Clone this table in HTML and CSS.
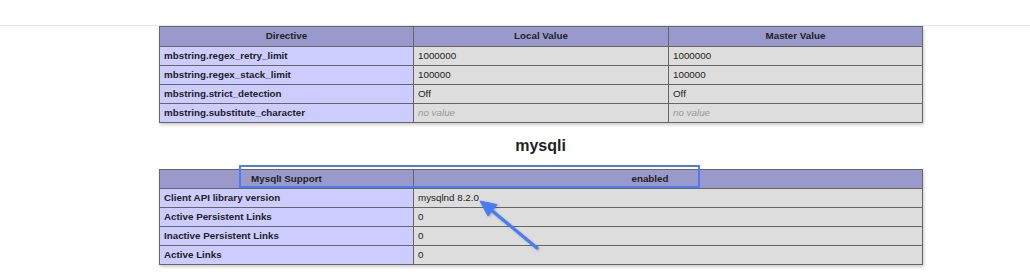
FILE: index.html
```html
<!DOCTYPE html>
<html>
<head>
<meta charset="utf-8">
<link rel="stylesheet" href="styles.css">
</head>
<body>
<div class="topbar"></div>
<div class="page">
  <table class="info first">
    <colgroup><col class="c1"><col class="c2"><col class="c3"></colgroup>
    <tr class="h"><th>Directive</th><th>Local Value</th><th>Master Value</th></tr>
    <tr><td class="e">mbstring.regex_retry_limit</td><td class="v">1000000</td><td class="v">1000000</td></tr>
    <tr><td class="e">mbstring.regex_stack_limit</td><td class="v">100000</td><td class="v">100000</td></tr>
    <tr><td class="e">mbstring.strict_detection</td><td class="v">Off</td><td class="v">Off</td></tr>
    <tr><td class="e">mbstring.substitute_character</td><td class="v"><i class="nv">no value</i></td><td class="v"><i class="nv">no value</i></td></tr>
  </table>

  <h2 class="section">mysqli</h2>

  <table class="info">
    <colgroup><col class="c1"><col class="c23"></colgroup>
    <tr class="h"><th>MysqlI Support</th><th class="enabled">enabled</th></tr>
    <tr><td class="e">Client API library version</td><td class="v">mysqlnd 8.2.0</td></tr>
    <tr><td class="e">Active Persistent Links</td><td class="v">0</td></tr>
    <tr><td class="e">Inactive Persistent Links</td><td class="v">0</td></tr>
    <tr><td class="e">Active Links</td><td class="v">0</td></tr>
  </table>
</div>

<div class="highlight"></div>
<svg class="arrow" width="1030" height="275" viewBox="0 0 1030 275">
  <defs>
    <filter id="sh" x="-20%" y="-20%" width="140%" height="140%">
      <feDropShadow dx="1" dy="1" stdDeviation="1" flood-color="#000" flood-opacity="0.25"/>
    </filter>
  </defs>
  <g filter="url(#sh)" fill="#4a7cf0" stroke="#4a7cf0">
    <line x1="537" y1="248" x2="490" y2="209" stroke-width="3.2" stroke-linecap="round"/>
    <polygon points="480,201 497,204.5 488,216" stroke-width="1" stroke-linejoin="round"/>
  </g>
</svg>
</body>
</html>
```

FILE: styles.css
```css
html, body {
  margin: 0;
  padding: 0;
  background: #fff;
}
body {
  font-family: "Liberation Sans", Arial, Helvetica, sans-serif;
  color: #222;
  width: 1030px;
  height: 275px;
  overflow: hidden;
  position: relative;
}
.topbar {
  height: 25px;
  border-bottom: 1px solid #e6e6e6;
}
.page {
  margin-left: 159px;
  width: 763px;
}
table.info {
  border-collapse: collapse;
  width: 763px;
  table-layout: fixed;
  box-shadow: 1px 2px 3px #ccc;
}
col.c1 { width: 254px; }
col.c2 { width: 255px; }
col.c3 { width: 254px; }
col.c23 { width: 509px; }
.info th, .info td {
  border: 1px solid #666;
  font-size: 9.8px;
  line-height: 12px;
  padding: 3px 4px;
  vertical-align: middle;
  white-space: nowrap;
  overflow: hidden;
}
.info tr.h th {
  background: #9999cc;
  font-weight: bold;
  text-align: center;
  line-height: 12px;
  padding-top: 3px;
  padding-bottom: 3px;
}
.info.first tr.h th {
  padding-bottom: 4px;
}
.info th.enabled {
  font-weight: normal;
  padding-right: 40px;
}
.info td.e {
  background: #ccccff;
  font-weight: bold;
}
.info td.v {
  background: #dddddd;
}
.nv {
  color: #999;
}
h2.section {
  margin: 13px 0 13px;
  font-size: 16px;
  line-height: 20px;
  font-weight: bold;
  text-align: center;
  color: #222;
}
.highlight {
  position: absolute;
  left: 239px;
  top: 165px;
  width: 457px;
  height: 19px;
  border: 2px solid #4d7bf3;
}
.arrow {
  position: absolute;
  left: 0;
  top: 0;
  pointer-events: none;
}
```
